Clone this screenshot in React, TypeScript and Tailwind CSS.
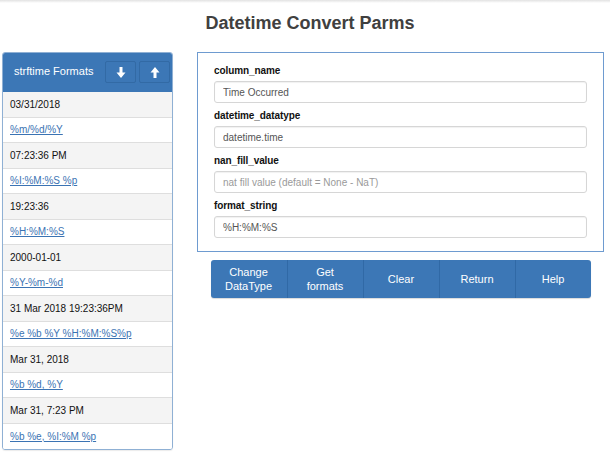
import React from 'react'

const formats = [
  { sample: '03/31/2018', fmt: '%m/%d/%Y' },
  { sample: '07:23:36 PM', fmt: '%I:%M:%S %p' },
  { sample: '19:23:36', fmt: '%H:%M:%S' },
  { sample: '2000-01-01', fmt: '%Y-%m-%d' },
  { sample: '31 Mar 2018 19:23:36PM', fmt: '%e %b %Y %H:%M:%S%p' },
  { sample: 'Mar 31, 2018', fmt: '%b %d, %Y' },
  { sample: 'Mar 31, 7:23 PM', fmt: '%b %e, %I:%M %p' },
]

const fields = [
  { label: 'column_name', value: 'Time Occurred' },
  { label: 'datetime_datatype', value: 'datetime.time' },
  { label: 'nan_fill_value', value: '', placeholder: 'nat fill value (default = None - NaT)' },
  { label: 'format_string', value: '%H:%M:%S' },
]

const buttons = [['Change', 'DataType'], ['Get', 'formats'], ['Clear'], ['Return'], ['Help']]

function Arrow({ up }: { up?: boolean }) {
  return (
    <svg width="10" height="11" viewBox="0 0 10 11" className={up ? 'rotate-180' : ''}>
      <path d="M3.5 0h3v5.5h3L5 11 0.5 5.5h3z" fill="white" />
    </svg>
  )
}

export default function App() {
  return (
    <div className="relative h-[462px] w-[610px] overflow-hidden bg-white font-['Liberation_Sans',Arial,sans-serif]">
      <div className="h-[3px] bg-gradient-to-b from-[#e2e2e2] to-white" />
      <h1 className="mt-[10px] pl-[10px] text-center text-[18px] font-bold leading-[20px] text-[#404040]">
        Datetime Convert Parms
      </h1>

      <div className="mt-[19px] flex items-start pl-[2px]">
        {/* Formats list */}
        <div className="w-[171px] overflow-hidden rounded-[3px] border border-[#8fb0d4] shadow-[0_1px_1px_rgba(0,0,0,0.08)]">
          <div className="flex h-[39px] items-start justify-between bg-[#3c77b6] pl-[11px] pr-[2px] pt-[8px]">
            <span className="pt-[2px] text-[11px] text-white">strftime Formats</span>
            <div className="flex gap-[3px]">
              <button className="flex h-[22px] w-[31px] items-center justify-center rounded-[2px] border border-[#326aa5] bg-[#3c77b6]">
                <Arrow />
              </button>
              <button className="flex h-[22px] w-[31px] items-center justify-center rounded-[2px] border border-[#326aa5] bg-[#3c77b6]">
                <Arrow up />
              </button>
            </div>
          </div>
          {formats.map((f) => (
            <React.Fragment key={f.fmt}>
              <div className="flex h-[25.5px] items-center border-b border-[#dedede] bg-[#f4f4f4] pl-[7px] text-[10px] text-[#111]">
                {f.sample}
              </div>
              <div className="flex h-[25.5px] items-center border-b border-[#dedede] bg-white pl-[7px] text-[10px] last:border-b-0">
                <a href="#" className="text-[#3b73b3] underline">
                  {f.fmt}
                </a>
              </div>
            </React.Fragment>
          ))}
        </div>

        {/* Parms form */}
        <div className="ml-[24px] flex w-[407px] flex-col items-center">
          <div className="h-[200px] w-full border border-[#6e9bd0] px-[16px] pt-[10px]">
            {fields.map((f) => (
              <div key={f.label} className="mb-[5px]">
                <div className="mb-[3px] h-[15px] text-[10px] font-bold leading-[15px] tracking-[-0.1px] text-[#111]">
                  {f.label}
                </div>
                <input
                  readOnly
                  value={f.value}
                  placeholder={f.placeholder}
                  className="block h-[22px] w-[373px] rounded-[3px] border border-[#d6d6d6] px-[8px] text-[10px] text-[#555] placeholder:text-[#9a9a9a] shadow-[inset_0_1px_1px_rgba(0,0,0,0.06)] outline-none"
                />
              </div>
            ))}
          </div>

          <div className="mt-[8px] flex h-[38px] w-[380px] overflow-hidden rounded-[3px] bg-[#3c77b6] shadow-[0_1px_1px_rgba(0,0,0,0.15)]">
            {buttons.map((lines, i) => (
              <button
                key={lines[0]}
                className={`flex w-[76px] flex-col items-center justify-center text-center text-[11px] leading-[14px] text-white ${
                  i > 0 ? 'border-l border-[#3069a6]' : ''
                }`}
              >
                {lines.map((l) => (
                  <span key={l}>{l}</span>
                ))}
              </button>
            ))}
          </div>
        </div>
      </div>
    </div>
  )
}
